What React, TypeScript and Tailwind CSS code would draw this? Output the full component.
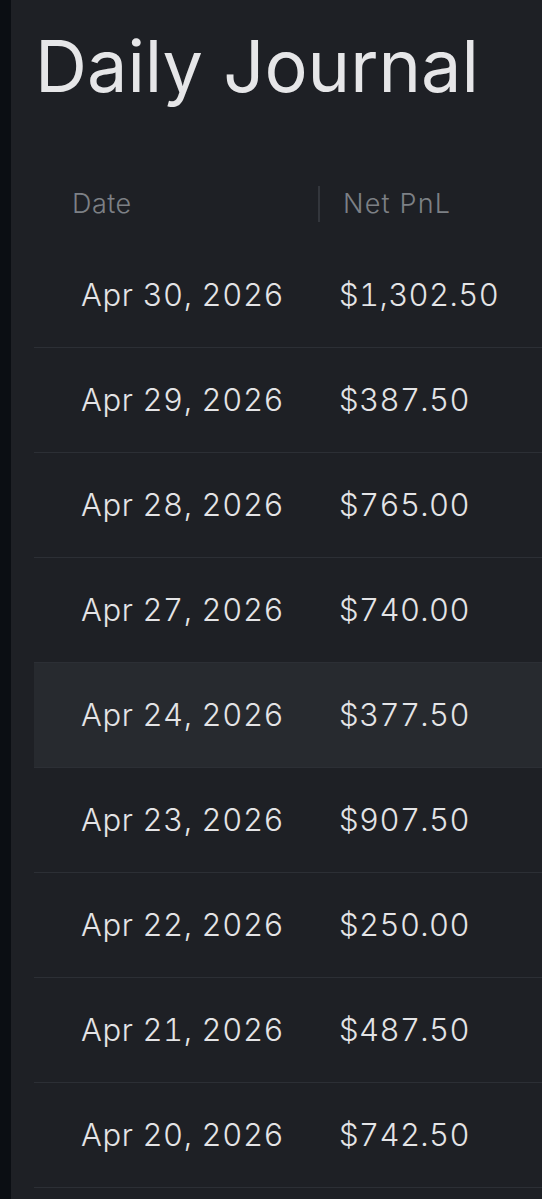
import React from "react";

const rows = [
  ["Apr 30, 2026", "$1,302.50"],
  ["Apr 29, 2026", "$387.50"],
  ["Apr 28, 2026", "$765.00"],
  ["Apr 27, 2026", "$740.00"],
  ["Apr 24, 2026", "$377.50"],
  ["Apr 23, 2026", "$907.50"],
  ["Apr 22, 2026", "$250.00"],
  ["Apr 21, 2026", "$487.50"],
  ["Apr 20, 2026", "$742.50"],
];

export default function App() {
  return (
    <div
      className="flex h-[1199px] w-[542px] overflow-hidden bg-[#1e2025]"
      style={{ fontFamily: "Inter, 'Noto Sans', sans-serif" }}
    >
      <div className="w-[11px] shrink-0 bg-[#0b0e13]" />
      <div className="flex min-w-0 flex-1 flex-col">
        <h1 className="ml-[24px] mt-[16px] h-[100px] text-[72px] leading-[100px] font-normal tracking-[0px] text-[#e6e6e8]">
          Daily Journal
        </h1>
        <div className="ml-[23px] mt-[49px] flex flex-col">
          <div className="flex h-[78px] items-center">
            <div className="w-[284px] pl-[38px] text-[27px] font-light tracking-[0.5px] text-[#7d8086]">Date</div>
            <div className="h-[36px] w-[2px] bg-[#33363c]" />
            <div className="pl-[23px] text-[27px] font-light tracking-[1.2px] text-[#7d8086]">Net PnL</div>
          </div>
          {rows.map(([d, v], i) => (
            <div
              key={i}
              className={`flex h-[105px] items-center border-b border-[#2c2f35] ${
                i === 4 ? "bg-[#272a2f]" : ""
              }`}
            >
              <div className="w-[305px] shrink-0 pl-[47px] text-[31px] font-light tabular-nums tracking-[0.6px] text-[#e4e4e6]">
                {d}
              </div>
              <div className="text-[31px] font-light tabular-nums tracking-[0.4px] text-[#e4e4e6]">{v}</div>
            </div>
          ))}
        </div>
      </div>
    </div>
  );
}
